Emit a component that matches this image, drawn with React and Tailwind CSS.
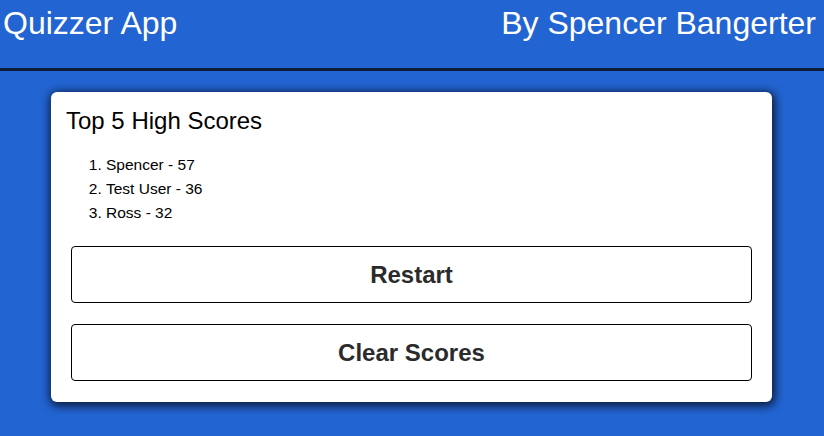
export default function App() {
  const scores = [
    ["Spencer", 57],
    ["Test User", 36],
    ["Ross", 32],
  ];
  return (
    <div className="min-h-[436px] bg-[#2264d2] font-['Liberation_Sans',Arial,sans-serif] pb-8">
      <header className="h-[71px] border-b-[3px] border-[#0d1e3b] flex justify-between items-start pt-[5px] pl-[3px] pr-2 text-white text-[32px] leading-[37px]">
        <span>Quizzer App</span>
        <span>By Spencer Bangerter</span>
      </header>
      <div className="mt-[21px] ml-[51px] w-[721px] bg-white rounded-md shadow-[1px_2px_10px_2px_rgba(0,0,0,0.75)] pt-[15px] px-[15px] pb-[21px] text-black">
        <h2 className="text-[24px] leading-[28px]">Top 5 High Scores</h2>
        <ol className="list-decimal pl-10 mt-[18px] text-[15.5px] leading-6">
          {scores.map(([n, s]) => (
            <li key={n}>
              {n} - {s}
            </li>
          ))}
        </ol>
        <div className="mt-[21px] px-[5px] flex flex-col gap-[21px]">
          <button className="h-[57px] w-full border border-black rounded bg-white text-[24px] font-bold text-[#2b2b2b]">
            Restart
          </button>
          <button className="h-[57px] w-full border border-black rounded bg-white text-[24px] font-bold text-[#2b2b2b]">
            Clear Scores
          </button>
        </div>
      </div>
    </div>
  );
}
